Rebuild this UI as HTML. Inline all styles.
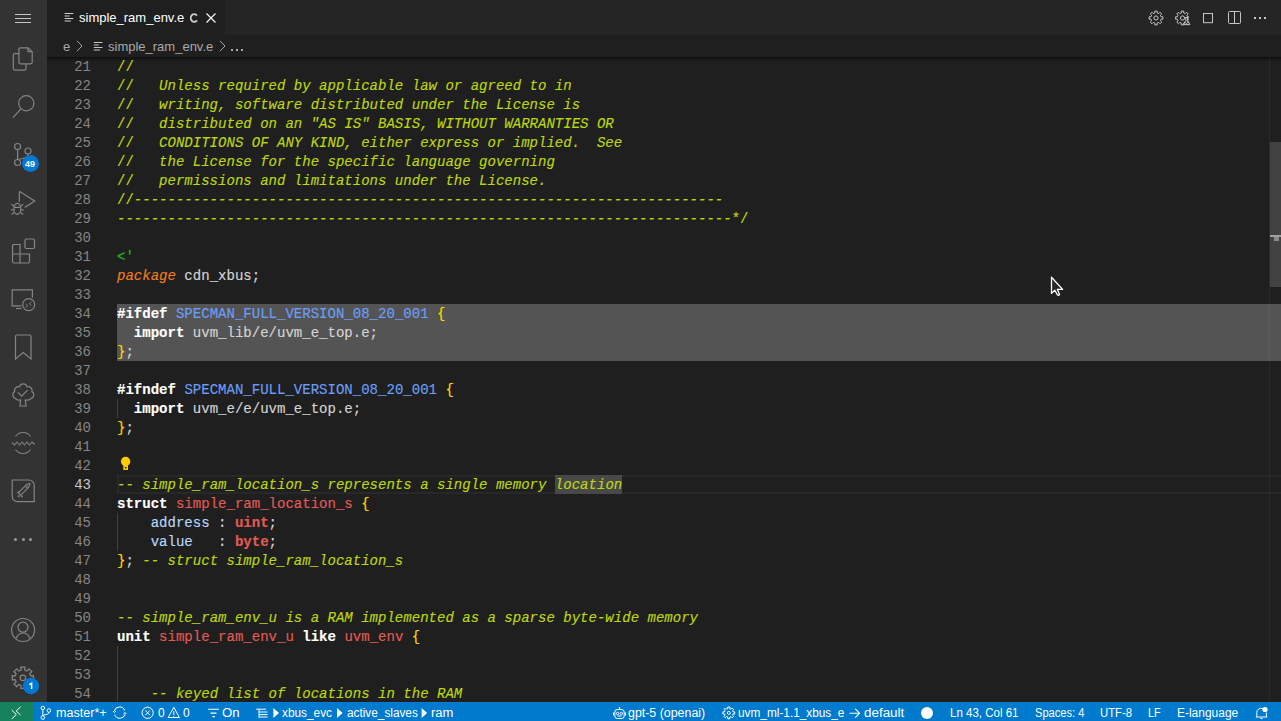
<!DOCTYPE html>
<html><head><meta charset="utf-8">
<style>
*{box-sizing:border-box}
html,body{margin:0;padding:0}
body{width:1281px;height:721px;overflow:hidden;background:#1f1f1f;position:relative;font-family:"Liberation Sans",sans-serif;}
.abs{position:absolute}
#act{position:absolute;left:0;top:0;width:47px;height:702px;background:#333333}
#tabs{position:absolute;left:47px;top:0;width:1234px;height:35px;background:#252526}
#tab{position:absolute;left:47px;top:0;width:178px;height:35px;background:#1f1f1f}
#bc{position:absolute;left:47px;top:35px;width:1234px;height:22px;background:#1f1f1f}
#shadow{position:absolute;left:47px;top:57px;width:1234px;height:4px;background:linear-gradient(rgba(0,0,0,0.55),rgba(0,0,0,0))}
.ln{position:absolute;left:47px;margin-top:1px;width:44px;text-align:right;font-family:"Liberation Mono",monospace;font-size:14px;line-height:19px;height:19px;color:#858585;white-space:pre}
.ln.cur{color:#c6c6c6}
.cl{position:absolute;left:117px;margin-top:1px;-webkit-text-stroke:0.15px currentColor;font-family:"Liberation Mono",monospace;font-size:14.045px;line-height:19px;height:19px;color:#d4d4d4;white-space:pre}
.cm{color:#bcd70e}
.cmi{color:#bcd70e;font-style:italic}
.gr{color:#1fb81f}
.or{color:#ef7d1f;font-style:italic}
.kw{color:#ffffff;font-weight:bold}
.bl{color:#6b9ef5}
.br{color:#ffd700}
.ty{color:#e25b55}
.tyb{color:#e25b55;font-weight:bold}
.fd{color:#b9d7f8}
.wh{}
#status{position:absolute;left:0;top:702px;width:1281px;height:19px;background:#007acc;color:#fff;font-size:12px}
#remote{position:absolute;left:0;top:0;width:33px;height:19px;background:#16825d}
.st{position:absolute;top:1px;line-height:20px;white-space:pre;color:#fff}
.ui{font-family:"Liberation Sans",sans-serif}
</style></head><body>
<div id="act">
 <svg class="abs" style="left:0;top:0" width="47" height="701" viewBox="0 0 47 701" fill="none" stroke="#858585" stroke-width="1.2">
  <!-- hamburger -->
  <path d="M15 14.5h16M15 18.5h16M15 22.5h16" stroke="#c5c5c5" stroke-width="1"/>
  <!-- files -->
  <path d="M18.9 53.6h-4.1a1.5 1.5 0 0 0-1.5 1.5v13.6a1.5 1.5 0 0 0 1.5 1.5h9.7a1.5 1.5 0 0 0 1.5-1.5v-4.8"/>
  <path d="M20.4 47.8h7.6l4.2 3.9v10.6a1.5 1.5 0 0 1-1.5 1.5h-10.3a1.5 1.5 0 0 1-1.5-1.5v-13a1.5 1.5 0 0 1 1.5-1.5z M28 47.8v3.9h4.2"/>
  <!-- search -->
  <circle cx="26.3" cy="103.3" r="7.6"/>
  <path d="M20.9 108.8L12.8 117.8"/>
  <!-- source control -->
  <circle cx="17.6" cy="146.5" r="3"/>
  <circle cx="28" cy="151" r="3"/>
  <circle cx="17.6" cy="162.5" r="3"/>
  <path d="M17.6 149.5v10M28 154c0 3-2.5 4-5.5 4.5-2.5.4-4 1-4.9 1.5"/>
  <!-- run debug -->
  <path d="M19.3 191.5v10.3M19.3 191.3l15.4 9.8-10 6.5"/>
  <ellipse cx="17.35" cy="208.8" rx="3.4" ry="5.5"/><path d="M14 207.3h6.7M11.5 204.3l2.6 2M23.2 204.3l-2.6 2M11 209.8h3M20.7 209.8h3M11.5 214.5l2.6-2M23.2 214.5l-2.6-2"/>
  <!-- extensions -->
  <path d="M12.5 244.5h7.5v9.5h9.5v7.5a1.5 1.5 0 0 1-1.5 1.5h-14a1.5 1.5 0 0 1-1.5-1.5v-15.5a1.5 1.5 0 0 1 1.5-1.5z M12 254h8M20 254v9"/>
  <rect x="25" y="239" width="9.5" height="9.5" rx="1.5"/>
  <!-- remote explorer -->
  <path d="M21.5 305.8h-9.3v-16h20.2v8"/>
  <path d="M16 308.5h5.5"/>
  <circle cx="28.7" cy="304.6" r="6"/>
  <path d="M25.8 304l1.7 1.7-1.7 1.7M31.3 302l-1.8 1.7 1.8 1.7" stroke-width="1"/>
  <!-- bookmark -->
  <path d="M15.5 359v-22.5a1.5 1.5 0 0 1 1.5-1.5h12.5a1.5 1.5 0 0 1 1.5 1.5v22.5l-7.8-6.5z"/>
  <!-- testing tree -->
  <path d="M20.6 400C17 400.5 16 399.3 15.3 398.3C12.2 397.5 12 392.8 14.6 391.6C13.8 388.3 16.5 386.2 19.6 386.6C20.6 383 26 383 27 386.6C30 386.2 32.8 388.3 32 391.6C34.6 392.8 34.4 397.5 31.3 398.3C30.6 399.3 29.6 400.5 25.3 400L26 406H20z"/>
  <path d="M18 392.4l3.6 3.8 6-6"/>
  <!-- wave -->
  <path d="M15.5 436.5a9 9 0 0 1 15 0M15.5 449.5a9 9 0 0 0 15 0" stroke-width="1.1"/>
  <path d="M12 442.5l2.5 2.5 2.5-3 2.5 3 2.5-3 2.5 3 2.5-3 2.5 3 2.5-3 2.5 2.5" stroke-width="1.1"/>
  <!-- rocket square -->
  <path d="M12.2 480h16.5a5.5 5.5 0 0 1 5.5 5.5v16.2h-16.5a5.5 5.5 0 0 1-5.5-5.5z"/>
  <path d="M20.7 495.2L29 486.9L29.9 483.6L26.6 484.5L18.3 492.8Z" stroke-width="1.1"/><circle cx="26.6" cy="486.8" r="0.9" stroke-width="0.9"/><rect x="17.4" y="491.4" width="1.8" height="1.8" fill="#858585" stroke="none"/><rect x="17.8" y="495.3" width="1.8" height="1.8" fill="#858585" stroke="none"/><rect x="20.9" y="495.5" width="1.8" height="1.8" fill="#858585" stroke="none"/>
  <!-- account -->
  <circle cx="23.1" cy="630" r="11.5"/>
  <circle cx="23" cy="627.2" r="5"/>
  <path d="M16 638.6c1.5-3.7 4-5.6 7-5.6s5.5 1.9 7 5.6"/>
 </svg>
 <!-- more dots -->
 <div class="abs" style="left:14px;top:538px;width:3px;height:3px;border-radius:50%;background:#9a9a9a"></div>
 <div class="abs" style="left:21.5px;top:538px;width:3px;height:3px;border-radius:50%;background:#9a9a9a"></div>
 <div class="abs" style="left:29px;top:538px;width:3px;height:3px;border-radius:50%;background:#9a9a9a"></div>
 <!-- gear -->
 <svg class="abs" style="left:0;top:0" width="47" height="702" viewBox="0 0 47 702" fill="none" stroke="#858585" stroke-width="1.25">
  <path d="M30.58 675.96L33.51 675.78L33.51 679.82L30.58 679.64L29.64 681.93L31.83 683.87L28.97 686.73L27.03 684.54L24.74 685.48L24.92 688.41L20.88 688.41L21.06 685.48L18.77 684.54L16.83 686.73L13.97 683.87L16.16 681.93L15.22 679.64L12.29 679.82L12.29 675.78L15.22 675.96L16.16 673.67L13.97 671.73L16.83 668.87L18.77 671.06L21.06 670.12L20.88 667.19L24.92 667.19L24.74 670.12L27.03 671.06L28.97 668.87L31.83 671.73L29.64 673.67Z"/>
  <circle cx="22.9" cy="677.8" r="2.8"/>
 </svg>
 <!-- badges -->
 <div class="abs" style="left:21.5px;top:155px;width:17px;height:17px;border-radius:50%;background:#0078d4;color:#fff;font-size:9px;font-weight:bold;text-align:center;line-height:18px">49</div>
 <svg class="abs" style="left:0;top:0" width="47" height="702" viewBox="0 0 47 702"><circle cx="31" cy="686" r="8.2" fill="#0078d4"/><path d="M29.3 684.6l2.3-1.3v5.6" fill="none" stroke="#fff" stroke-width="1.5"/></svg>
</div>

<div id="tabs"></div>
<div id="shadow"></div>
<div id="tab">
 <svg class="abs" style="left:17px;top:12px" width="11" height="11" viewBox="0 0 11 11" stroke="#d0d0d0" stroke-width="1.2"><path d="M0.6 1.5h8.7M0.6 4h5M0.6 6.5h8.7M0.6 9h6.3"/></svg>
 <span class="st" style="left:32px;top:8px;font-size:13px;color:#ffffff;line-height:20px">simple_ram_env.e</span>
 <svg class="abs" style="left:140px;top:10px" width="14" height="14" viewBox="0 0 14 14" fill="none" stroke="#cccccc" stroke-width="1.9"><path d="M9.9 5.6A3.4 3.9 0 1 0 9.9 10.4"/></svg>
 <svg class="abs" style="left:158px;top:12px" width="12" height="12" viewBox="0 0 12 12" stroke="#ffffff" stroke-width="1.1"><path d="M1.5 1.5l9 9M10.5 1.5l-9 9"/></svg>
</div>
<div id="bc">
 <span class="st" style="left:16px;top:2px;font-size:13px;color:#a9a9a9">e</span>
 <svg class="abs" style="left:29px;top:5px" width="7" height="12" viewBox="0 0 7 12" fill="none" stroke="#a9a9a9" stroke-width="1"><path d="M1 0.8l5 5.2-5 5.2"/></svg>
 <svg class="abs" style="left:46px;top:6px" width="11" height="11" viewBox="0 0 11 11" stroke="#c5c5c5" stroke-width="1.2"><path d="M0.8 1.5h8.7M0.8 4h5M0.8 6.5h8.7M0.8 9h6.3"/></svg>
 <span class="st" style="left:61px;top:2px;font-size:13px;color:#a9a9a9">simple_ram_env.e</span>
 <svg class="abs" style="left:172px;top:5px" width="7" height="12" viewBox="0 0 7 12" fill="none" stroke="#a9a9a9" stroke-width="1"><path d="M1 0.8l5 5.2-5 5.2"/></svg>
 <div class="abs" style="left:184px;top:14px;width:2px;height:2px;background:#a9a9a9"></div><div class="abs" style="left:189px;top:14px;width:2px;height:2px;background:#a9a9a9"></div><div class="abs" style="left:194px;top:14px;width:2px;height:2px;background:#a9a9a9"></div>
</div>

<!-- top right icons -->
<svg class="abs" style="left:0;top:0" width="1281" height="35" viewBox="0 0 1281 35" fill="none" stroke="#c5c5c5" stroke-width="1">
 <path d="M1161.07 16.85L1162.89 16.77L1162.89 19.23L1161.07 19.15L1160.40 20.77L1161.74 22.00L1160.00 23.74L1158.77 22.40L1157.15 23.07L1157.23 24.89L1154.77 24.89L1154.85 23.07L1153.23 22.40L1152.00 23.74L1150.26 22.00L1151.60 20.77L1150.93 19.15L1149.11 19.23L1149.11 16.77L1150.93 16.85L1151.60 15.23L1150.26 14.00L1152.00 12.26L1153.23 13.60L1154.85 12.93L1154.77 11.11L1157.23 11.11L1157.15 12.93L1158.77 13.60L1160.00 12.26L1161.74 14.00L1160.40 15.23Z"/>
 <circle cx="1156" cy="18" r="2.1"/>
 <defs><clipPath id="gc"><path d="M1170 0h30v15h-11v12h-19z"/></clipPath></defs>
 <path d="M1187.57 16.85L1189.39 16.77L1189.39 19.23L1187.57 19.15L1186.90 20.77L1188.24 22.00L1186.50 23.74L1185.27 22.40L1183.65 23.07L1183.73 24.89L1181.27 24.89L1181.35 23.07L1179.73 22.40L1178.50 23.74L1176.76 22.00L1178.10 20.77L1177.43 19.15L1175.61 19.23L1175.61 16.77L1177.43 16.85L1178.10 15.23L1176.76 14.00L1178.50 12.26L1179.73 13.60L1181.35 12.93L1181.27 11.11L1183.73 11.11L1183.65 12.93L1185.27 13.60L1186.50 12.26L1188.24 14.00L1186.90 15.23Z" clip-path="url(#gc)"/>
 <circle cx="1182.5" cy="18" r="2.1"/>
 <path d="M1185.8 17.5v2.8l-2.3 4.3h6.4l-2.3-4.3v-2.8M1185.3 17.5h3"/>
 <rect x="1203.5" y="13.5" width="9" height="9.2"/>
 <rect x="1228.5" y="11.5" width="12" height="12" rx="1"/>
 <path d="M1234.5 11.5v12"/>
</svg>
<div class="abs" style="left:1254px;top:17px;width:2px;height:2px;background:#c5c5c5"></div>
<div class="abs" style="left:1259px;top:17px;width:2px;height:2px;background:#c5c5c5"></div>
<div class="abs" style="left:1264px;top:17px;width:2px;height:2px;background:#c5c5c5"></div>

<!-- editor -->
<div class="abs" style="left:117px;top:475px;width:1170px;height:19px;border:2px solid #282828"></div>
<div class="abs" style="left:117px;top:304px;width:1164px;height:57px;background:#545454"></div>
<div class="abs" style="left:555px;top:475px;width:67px;height:19px;background:#484848"></div>
<div class="ln" style="top:57px">21</div>
<div class="ln" style="top:76px">22</div>
<div class="ln" style="top:95px">23</div>
<div class="ln" style="top:114px">24</div>
<div class="ln" style="top:133px">25</div>
<div class="ln" style="top:152px">26</div>
<div class="ln" style="top:171px">27</div>
<div class="ln" style="top:190px">28</div>
<div class="ln" style="top:209px">29</div>
<div class="ln" style="top:228px">30</div>
<div class="ln" style="top:247px">31</div>
<div class="ln" style="top:266px">32</div>
<div class="ln" style="top:285px">33</div>
<div class="ln" style="top:304px">34</div>
<div class="ln" style="top:323px">35</div>
<div class="ln" style="top:342px">36</div>
<div class="ln" style="top:361px">37</div>
<div class="ln" style="top:380px">38</div>
<div class="ln" style="top:399px">39</div>
<div class="ln" style="top:418px">40</div>
<div class="ln" style="top:437px">41</div>
<div class="ln" style="top:456px">42</div>
<div class="ln cur" style="top:475px">43</div>
<div class="ln" style="top:494px">44</div>
<div class="ln" style="top:513px">45</div>
<div class="ln" style="top:532px">46</div>
<div class="ln" style="top:551px">47</div>
<div class="ln" style="top:570px">48</div>
<div class="ln" style="top:589px">49</div>
<div class="ln" style="top:608px">50</div>
<div class="ln" style="top:627px">51</div>
<div class="ln" style="top:646px">52</div>
<div class="ln" style="top:665px">53</div>
<div class="ln" style="top:684px">54</div>
<div class="cl" style="top:57px"><span class="cm">//</span></div>
<div class="cl" style="top:76px"><span class="cm">//</span><span class="cmi">   Unless required by applicable law or agreed to in</span></div>
<div class="cl" style="top:95px"><span class="cm">//</span><span class="cmi">   writing, software distributed under the License is</span></div>
<div class="cl" style="top:114px"><span class="cm">//</span><span class="cmi">   distributed on an &quot;AS IS&quot; BASIS, WITHOUT WARRANTIES OR</span></div>
<div class="cl" style="top:133px"><span class="cm">//</span><span class="cmi">   CONDITIONS OF ANY KIND, either express or implied.  See</span></div>
<div class="cl" style="top:152px"><span class="cm">//</span><span class="cmi">   the License for the specific language governing</span></div>
<div class="cl" style="top:171px"><span class="cm">//</span><span class="cmi">   permissions and limitations under the License.</span></div>
<div class="cl" style="top:190px"><span class="cm">//</span><span class="cmi">----------------------------------------------------------------------</span></div>
<div class="cl" style="top:209px"><span class="cmi">-------------------------------------------------------------------------</span><span class="cm">*/</span></div>
<div class="cl" style="top:228px"></div>
<div class="cl" style="top:247px"><span class="gr">&lt;&#x27;</span></div>
<div class="cl" style="top:266px"><span class="or">package</span> cdn_xbus;</div>
<div class="cl" style="top:285px"></div>
<div class="cl" style="top:304px"><span class="kw">#ifdef</span> <span class="bl">SPECMAN_FULL_VERSION_08_20_001</span> <span class="br">{</span></div>
<div class="cl" style="top:323px">  <span class="kw">import</span> uvm_lib/e/uvm_e_top.e;</div>
<div class="cl" style="top:342px"><span class="br">}</span>;</div>
<div class="cl" style="top:361px"></div>
<div class="cl" style="top:380px"><span class="kw">#ifndef</span> <span class="bl">SPECMAN_FULL_VERSION_08_20_001</span> <span class="br">{</span></div>
<div class="cl" style="top:399px">  <span class="kw">import</span> uvm_e/e/uvm_e_top.e;</div>
<div class="cl" style="top:418px"><span class="br">}</span>;</div>
<div class="cl" style="top:437px"></div>
<div class="cl" style="top:456px"></div>
<div class="cl" style="top:475px"><span class="cm">-- </span><span class="cmi">simple_ram_location_s represents a single memory </span><span class="cmi wh">location</span></div>
<div class="cl" style="top:494px"><span class="kw">struct</span> <span class="ty">simple_ram_location_s</span> <span class="br">{</span></div>
<div class="cl" style="top:513px">    <span class="fd">address</span> : <span class="tyb">uint</span>;</div>
<div class="cl" style="top:532px">    <span class="fd">value</span>   : <span class="tyb">byte</span>;</div>
<div class="cl" style="top:551px"><span class="br">}</span>; <span class="cm">-- </span><span class="cmi">struct simple_ram_location_s</span></div>
<div class="cl" style="top:570px"></div>
<div class="cl" style="top:589px"></div>
<div class="cl" style="top:608px"><span class="cm">-- </span><span class="cmi">simple_ram_env_u is a RAM implemented as a sparse byte-wide memory</span></div>
<div class="cl" style="top:627px"><span class="kw">unit</span> <span class="ty">simple_ram_env_u</span> <span class="kw">like</span> <span class="ty">uvm_env</span> <span class="br">{</span></div>
<div class="cl" style="top:646px"></div>
<div class="cl" style="top:665px"></div>
<div class="cl" style="top:684px">    <span class="cm">-- </span><span class="cmi">keyed list of locations in the RAM</span></div>
<!-- indent guides -->
<div class="abs" style="left:117px;top:399px;width:1px;height:19px;background:#404040"></div>
<div class="abs" style="left:117px;top:513px;width:1px;height:38px;background:#404040"></div>
<div class="abs" style="left:117px;top:646px;width:1px;height:55px;background:#404040"></div>
<!-- lightbulb -->
<svg class="abs" style="left:119px;top:456px" width="13" height="15" viewBox="0 0 13 15">
 <circle cx="6.6" cy="5.5" r="4.7" fill="#ffcc00"/>
 <path d="M4.3 8.5h4.7v5.5h-4.7z M5.8 10.9h1.7v1.7h-1.7z" fill="#ffcc00" fill-rule="evenodd"/>
</svg>
<!-- scrollbar -->
<div class="abs" style="left:1270px;top:142px;width:11px;height:145px;background:#424242"></div>
<div class="abs" style="left:1269px;top:57px;width:1px;height:645px;background:rgba(255,255,255,0.05)"></div>
<div class="abs" style="left:1270px;top:235px;width:11px;height:2px;background:#a0a0a0"></div>
<div class="abs" style="left:1274px;top:237px;width:5px;height:4px;background:#8a8a8a"></div>
<!-- mouse cursor -->
<svg class="abs" style="left:1050px;top:276px" width="14" height="20" viewBox="0 0 14 20">
 <path d="M1.5 1.2V17.4L4.8 14.3L7.3 18.8Q8.2 19.6 9.3 18.9L9.6 18.4L7.4 13.4H12.6Z" fill="#262626" stroke="#fff" stroke-width="1.3" stroke-linejoin="round"/>
</svg>

<div id="status">
 <div id="remote"></div>
 <svg class="abs" style="left:0;top:0" width="1281" height="19" viewBox="0 0 1281 19" fill="none" stroke="#fff" stroke-width="1">
  <path d="M11.7 8l4.6 4.5-4.6 4.5M20.6 4.8l-4.4 4.2 4.4 4.2"/>
  <circle cx="42.8" cy="6" r="1.8"/><circle cx="48.9" cy="8.5" r="1.8"/><circle cx="42.8" cy="15.6" r="1.8"/>
  <path d="M42.8 7.8v6M48.9 10.3c0 2.2-2.5 2-4.5 2.6-1.2.4-1.6 .9-1.6 1"/>
  <path d="M114.2 9.2a5.5 5.5 0 0 1 10.5-.7M125.2 12a5.5 5.5 0 0 1-10.5.7"/>
  <path d="M113 9l1.3 1.5 1.6-1.3M126.4 12l-1.3-1.5-1.6 1.3"/>
  <circle cx="147.6" cy="10.8" r="5.6"/><path d="M145.3 8.5l4.6 4.6M149.9 8.5l-4.6 4.6"/>
  <path d="M173.8 5.3l5.6 10.2h-11.2z M173.8 9v4M173.8 13.8v.9"/>
  <path d="M208.2 7.3h10.7M210.5 11.1h6M212.3 14.6h2.6" stroke-width="1.1"/>
  <path d="M256.2 7.2h9.8M259 7.2v8.6M259 10h8.5M259 12.6h8.5M259 15h8.5" stroke-width="1"/>
 </svg>
 <svg class="abs" style="left:0;top:0" width="1281" height="19" viewBox="0 0 1281 19" fill="#fff" stroke="none">
  <path d="M273.4 6l5.6 5-5.6 5z"/>
  <path d="M337 6l5.6 5-5.6 5z"/>
  <path d="M421.6 6l5.6 5-5.6 5z"/>
  <circle cx="927" cy="11" r="6"/>
  <circle cx="1265" cy="7.5" r="2.6"/>
 </svg>
 <svg class="abs" style="left:0;top:0" width="1281" height="19" viewBox="0 0 1281 19" fill="none" stroke="#fff" stroke-width="1">
  <rect x="614.8" y="7.5" width="9.4" height="9" rx="2.5"/>
  <path d="M619.5 5v2.5M613.5 10.5v3M625.5 10.5v3"/>
  <circle cx="617.6" cy="11.5" r="1.2"/><circle cx="621.4" cy="11.5" r="1.2"/>
  <path d="M617.5 14h4"/>
  <path d="M733.09 9.92L734.71 9.85L734.71 11.95L733.09 11.88L732.52 13.24L733.72 14.33L732.23 15.82L731.14 14.62L729.78 15.19L729.85 16.81L727.75 16.81L727.82 15.19L726.46 14.62L725.37 15.82L723.88 14.33L725.08 13.24L724.51 11.88L722.89 11.95L722.89 9.85L724.51 9.92L725.08 8.56L723.88 7.47L725.37 5.98L726.46 7.18L727.82 6.61L727.75 4.99L729.85 4.99L729.78 6.61L731.14 7.18L732.23 5.98L733.72 7.47L732.52 8.56Z"/>
  <circle cx="728.8" cy="10.9" r="1.5"/>
  <path d="M1256.8 14.8v-4.3a4.2 4.2 0 0 1 6-3.8M1266.4 10.5v4.3M1255.8 15h11.5M1260.5 16.5h2"/>
 </svg>
 <span class="st" style="left:55.55px;transform:scaleX(1.049);transform-origin:0 0">master*+</span>
 <span class="st" style="left:158px">0</span>
 <span class="st" style="left:183px">0</span>
 <span class="st" style="left:222.4px;transform:scaleX(1.1);transform-origin:0 0">On</span>
 <span class="st" style="left:282.41px;transform:scaleX(0.986);transform-origin:0 0">xbus_evc</span>
 <span class="st" style="left:346.52px;transform:scaleX(0.983);transform-origin:0 0">active_slaves</span>
 <span class="st" style="left:430.72px;transform:scaleX(1.084);transform-origin:0 0">ram</span>
 <span class="st" style="left:628.37px;transform:scaleX(1.033);transform-origin:0 0">gpt-5 (openai)</span>
 <span class="st" style="left:737.77px;transform:scaleX(0.985);transform-origin:0 0">uvm_ml-1.1_xbus_e</span>
 <svg class="abs" style="left:846px;top:5px" width="16" height="12" viewBox="0 0 16 12" fill="none" stroke="#fff" stroke-width="1.1"><path d="M3.5 6.2h10M9.2 1.8l4.4 4.4-4.4 4.4"/></svg>
 <span class="st" style="left:863.68px;transform:scaleX(1.117);transform-origin:0 0">default</span>
 <span class="st" style="left:949.64px;transform:scaleX(0.959);transform-origin:0 0">Ln 43, Col 61</span>
 <span class="st" style="left:1034.68px;transform:scaleX(0.925);transform-origin:0 0">Spaces: 4</span>
 <span class="st" style="left:1100.46px;transform:scaleX(0.942);transform-origin:0 0">UTF-8</span>
 <span class="st" style="left:1148.49px;transform:scaleX(0.908);transform-origin:0 0">LF</span>
 <span class="st" style="left:1177.1px;transform:scaleX(0.997);transform-origin:0 0">E-language</span>
</div>
</body></html>
